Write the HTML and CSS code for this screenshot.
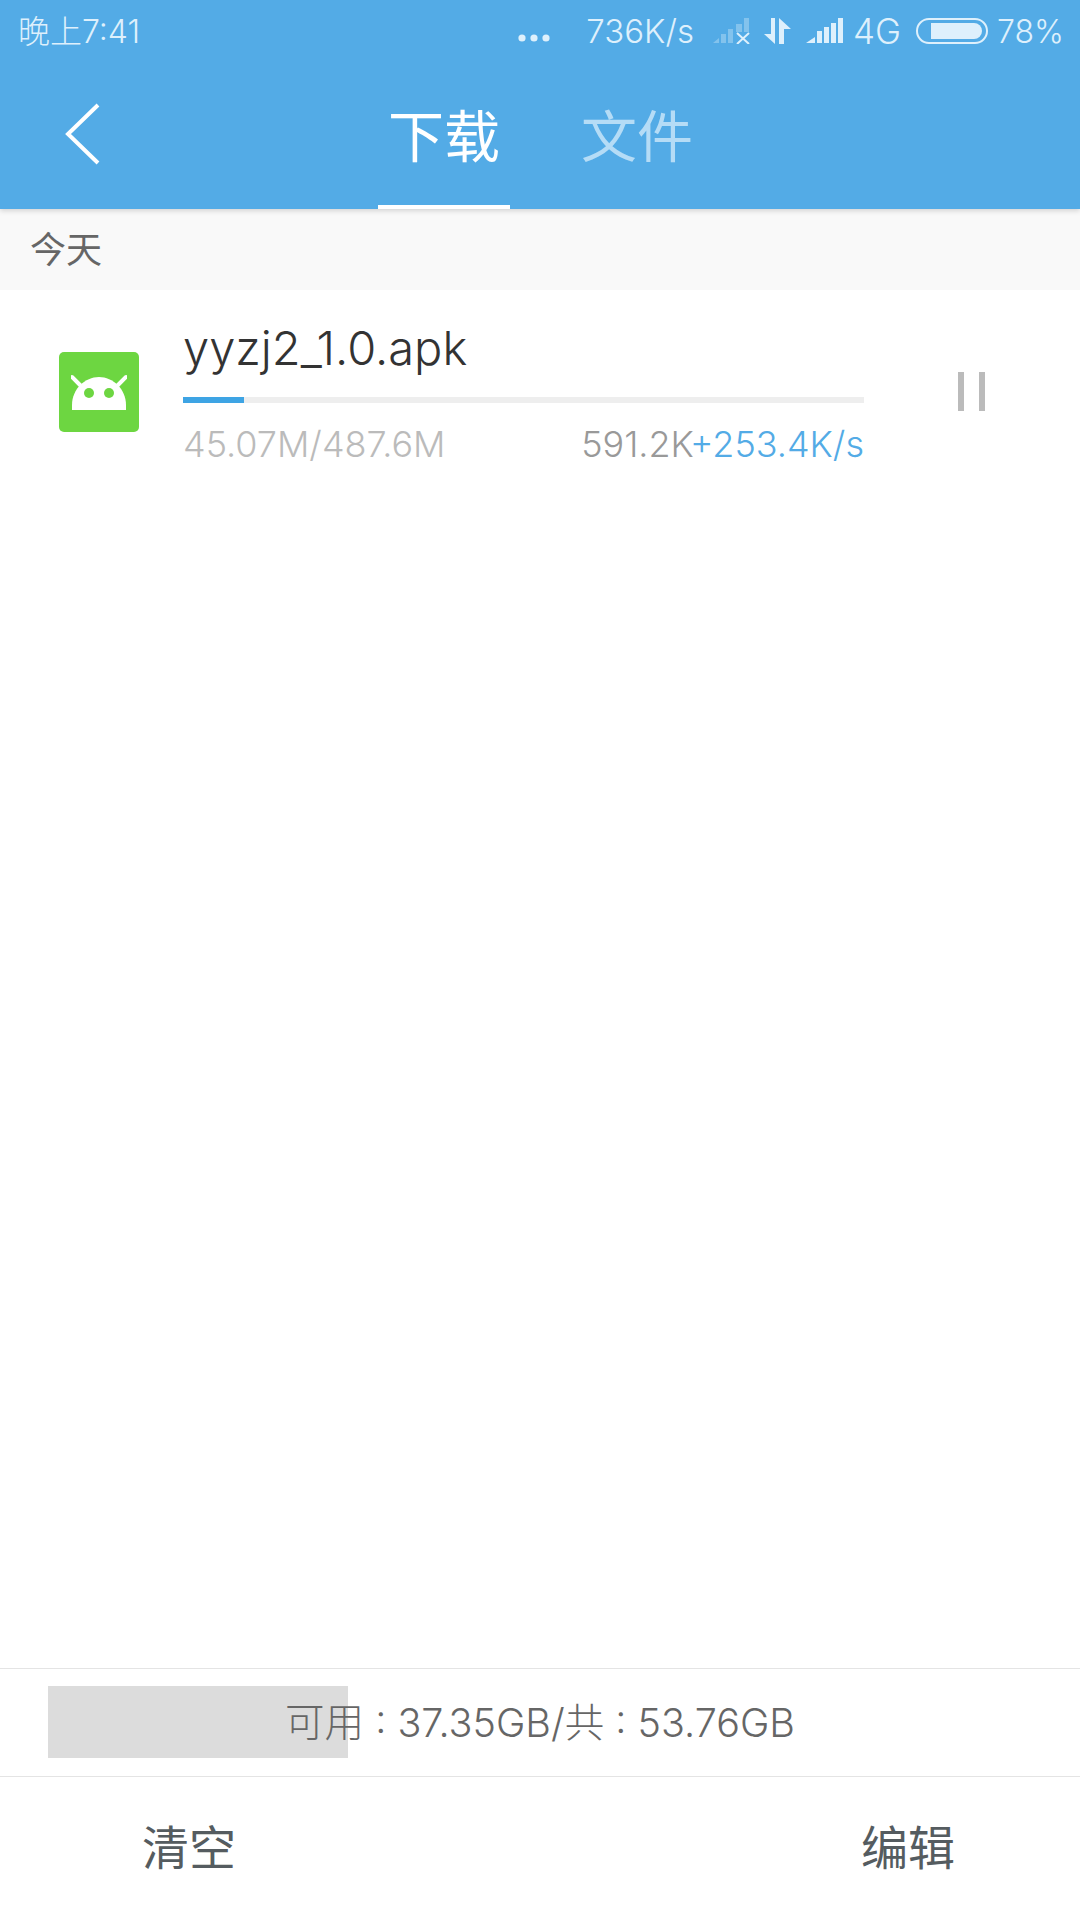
FILE: index.html
```html
<!DOCTYPE html>
<html lang="zh-CN">
<head>
    <meta charset="UTF-8">
    <meta name="viewport" content="width=device-width, initial-scale=1.0">
    <title>下载</title>
    <link rel="stylesheet" href="styles.css">
</head>
<body>

<div class="app">
    <header class="top">
        <div class="status-bar">
            <span class="status-time">晚上7:41</span>
            <div class="status-right">
                <svg class="status-dots" width="32" height="10" viewBox="0 0 32 10"><circle cx="4" cy="5" r="3.6"/><circle cx="16" cy="5" r="3.6"/><circle cx="28" cy="5" r="3.6"/></svg>
                <span class="status-speed">736K/s</span>
                <svg class="status-sim" width="37" height="26" viewBox="0 0 37 26">
                    <g opacity="0.35"><path d="M0 25 L6 20 V25 Z"/><rect x="8" y="16" width="5" height="9"/><rect x="15" y="11" width="5" height="14"/><rect x="23" y="6" width="6" height="8"/><rect x="31" y="0" width="5" height="14"/></g>
                    <path d="M24 15 L36 26 M36 15 L24 26" class="line"/>
                </svg>
                <svg class="status-arrows" width="27" height="27" viewBox="0 0 27 27">
                    <path d="M7 0 H11 V26 L0 16 H7 Z"/><path d="M15 0 L27 11 H20 V26 H15 Z"/>
                </svg>
                <svg class="status-signal" width="37" height="26" viewBox="0 0 37 26">
                    <path d="M0 25 L9 19 V25 Z"/><rect x="11" y="13" width="5" height="12"/><rect x="18" y="9" width="5" height="16"/><rect x="25" y="5" width="5" height="20"/><rect x="32" y="0" width="5" height="25"/>
                </svg>
                <span class="status-net">4G</span>
                <div class="battery"><div class="battery-fill"></div></div>
                <span class="status-pct">78%</span>
            </div>
        </div>
        <div class="toolbar">
            <svg class="back" width="36" height="62" viewBox="0 0 36 62"><path d="M33 2 L3 31 L33 60"/></svg>
            <nav class="tabs">
                <a class="tab active">下载</a>
                <a class="tab">文件</a>
            </nav>
        </div>
    </header>

    <div class="section-title">今天</div>

    <main class="list">
        <div class="item">
            <div class="apk-icon">
                <svg width="56" height="36" viewBox="0 0 56 36">
                    <path d="M1 3 L9 11 M55 3 L47 11" class="antenna"/>
                    <path d="M1 36 V31 C1 15 14 3 28 3 C42 3 55 15 55 31 V36 Z"/>
                    <circle cx="18" cy="19" r="5" class="eye"/>
                    <circle cx="38" cy="19" r="5" class="eye"/>
                </svg>
            </div>
            <div class="item-body">
                <div class="item-name">yyzj2_1.0.apk</div>
                <div class="progress"><div class="progress-fill" style="width: 9%"></div></div>
                <div class="item-meta">
                    <span class="item-size">45.07M/487.6M</span>
                    <span class="item-speed">591.2K<em>+253.4K/s</em></span>
                </div>
            </div>
            <div class="pause"><span></span><span></span></div>
        </div>
    </main>

    <div class="storage">
        <div class="storage-used"></div>
        <span class="storage-text">可用 : 37.35GB/共 : 53.76GB</span>
    </div>

    <footer class="actions">
        <a class="action">清空</a>
        <a class="action">编辑</a>
    </footer>
</div>

</body>
</html>
```

FILE: styles.css
```css
html,
body {
    height: 100%;
    margin: 0;
    background-color: #fff;
    font-family: Inter, "Noto Sans CJK SC", sans-serif;
}
.app {
    display: flex;
    flex-direction: column;
    height: 1920px;
}
.top {
    height: 209px;
    background-color: #53abe6;
    position: relative;
    z-index: 2;
    box-shadow: 0 2px 5px rgba(0, 0, 0, 0.15);
}
.status-bar {
    display: flex;
    justify-content: space-between;
    align-items: center;
    height: 62px;
    padding: 0 16px 0 18px;
    color: #def0fc;
    font-size: 33px;
    font-weight: 300;
}
.status-time {
    font-size: 32px;
    margin-top: -4px;
}
.status-right {
    display: flex;
    align-items: center;
}
.status-right svg {
    fill: #def0fc;
}
.status-dots {
    margin-top: 14px;
    margin-right: 36px;
}
.status-sim {
    margin-left: 19px;
}
.status-sim .line {
    stroke: #def0fc;
    stroke-width: 2;
    fill: none;
}
.status-arrows {
    margin-left: 14px;
}
.status-signal {
    margin-left: 15px;
}
.status-net {
    margin-left: 10px;
    font-size: 35px;
}
.battery {
    width: 72px;
    height: 26px;
    margin-left: 15px;
    box-sizing: border-box;
    border: 2px solid #def0fc;
    border-radius: 13px;
    padding: 3px 4px 3px 13px;
}
.battery-fill {
    height: 100%;
    background-color: #def0fc;
    border-radius: 0 8px 8px 0;
}
.status-pct {
    margin-left: 9px;
    font-size: 32px;
}
.toolbar {
    height: 147px;
    display: flex;
    position: relative;
}
.back {
    position: absolute;
    left: 65px;
    top: 41px;
    fill: none;
    stroke: #fff;
    stroke-width: 4;
}
.tabs {
    display: flex;
    margin-left: 378px;
    gap: 61px;
}
.tab {
    width: 132px;
    box-sizing: border-box;
    padding-top: 42px;
    text-align: center;
    font-size: 56px;
    line-height: 66px;
    color: #b5dcf6;
}
.tab.active {
    color: #fff;
    border-bottom: 4px solid #fff;
}
.section-title {
    height: 81px;
    line-height: 83px;
    padding-left: 30px;
    background-color: #f9f9f9;
    color: #666;
    font-size: 36px;
}
.list {
    flex: 1;
}
.item {
    display: flex;
    height: 180px;
}
.apk-icon {
    width: 80px;
    height: 80px;
    margin: 62px 0 0 59px;
    background-color: #6dd641;
    border-radius: 5px;
    display: flex;
    justify-content: center;
    align-items: flex-start;
}
.apk-icon svg {
    margin-top: 22px;
    fill: #fff;
}
.apk-icon .antenna {
    stroke: #fff;
    stroke-width: 4;
    stroke-linecap: round;
    fill: none;
}
.apk-icon .eye {
    fill: #6dd641;
}
.item-body {
    width: 681px;
    margin-left: 44px;
}
.item-name {
    margin-top: 30px;
    height: 56px;
    line-height: 56px;
    font-size: 47px;
    font-weight: 300;
    color: #333;
}
.progress {
    height: 6px;
    margin-top: 21px;
    background-color: #eee;
}
.progress-fill {
    height: 100%;
    background-color: #3ea4e4;
}
.item-meta {
    display: flex;
    justify-content: space-between;
    margin-top: 19px;
    font-size: 36px;
    line-height: 44px;
    font-weight: 300;
}
.item-size {
    color: #bbb;
}
.item-speed {
    color: #999;
}
.item-speed em {
    font-style: normal;
    color: #53abe6;
}
.pause {
    display: flex;
    gap: 15px;
    margin: 82px 0 0 94px;
}
.pause span {
    width: 6px;
    height: 39px;
    background-color: #bbb;
}
.storage {
    height: 107px;
    border-top: 1px solid #e4e4e4;
    border-bottom: 1px solid #e4e4e4;
    position: relative;
    display: flex;
    justify-content: center;
    align-items: center;
}
.storage-used {
    position: absolute;
    left: 48px;
    top: 17px;
    width: 300px;
    height: 72px;
    background-color: #dcdcdc;
}
.storage-text {
    position: relative;
    top: -3px;
    font-size: 39.5px;
    font-weight: 300;
    color: #666;
}
.actions {
    height: 143px;
    box-sizing: border-box;
    display: flex;
    justify-content: space-between;
    align-items: center;
    padding: 0 125px 8px 142px;
}
.action {
    font-size: 47px;
    color: #555c60;
}
```
